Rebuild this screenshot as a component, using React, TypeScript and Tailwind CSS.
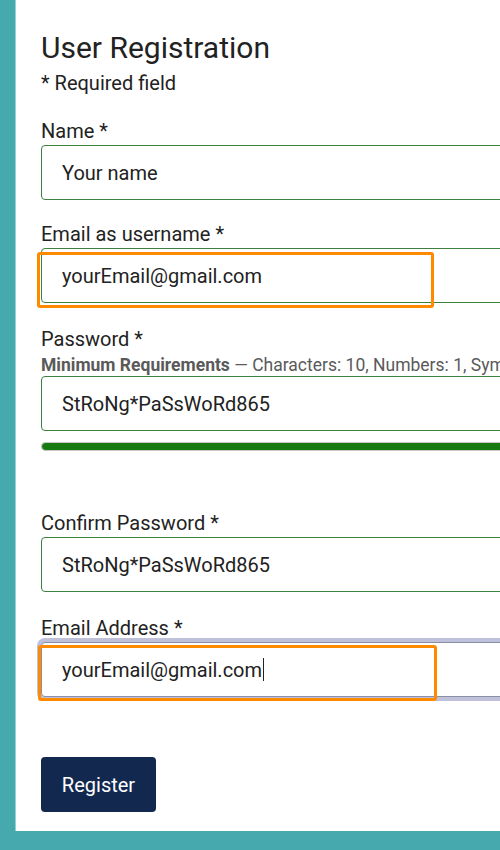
import React from "react";

function Field({
  label,
  value,
  hint,
  focused,
  highlight,
  className = "",
}: {
  label: string;
  value: string;
  hint?: boolean;
  focused?: boolean;
  highlight?: "a" | "b";
  className?: string;
}) {
  return (
    <div className={className}>
      <label className="block text-[20px] leading-[24px] text-[#222]">{label}</label>
      {hint && (
        <p className="mt-[4px] whitespace-nowrap text-[17.5px] leading-[20px] text-[#5a5a5a]">
          <span className="font-bold">Minimum Requirements</span> — Characters: 10, Numbers: 1, Symbols: 1
        </p>
      )}
      <div className={`relative ${hint ? "mt-[1px]" : "mt-[2px]"}`}>
        <div
          className={`flex h-[55px] w-[560px] items-center rounded-[4px] border bg-white pl-[20px] text-[20px] text-[#222] ${
            focused ? "border-[#8a8fa8] shadow-[0_0_0_4px_#bfc0da]" : "border-[#3d7f3d]"
          }`}
        >
          {value}
          {focused && <span className="ml-[1px] inline-block h-[23px] w-px bg-[#222]" />}
        </div>
        {highlight === "a" && (
          <div className="pointer-events-none absolute left-[-4px] top-[4px] h-[56px] w-[397px] rounded-[3px] border-[3px] border-[#ff8a00]" />
        )}
        {highlight === "b" && (
          <div className="pointer-events-none absolute left-[-3px] top-[3px] h-[56px] w-[399px] rounded-[3px] border-[3px] border-[#ff8a00]" />
        )}
      </div>
    </div>
  );
}

export default function App() {
  return (
    <div
      className="flex h-[850px] w-[500px] overflow-hidden bg-[#45a9ad] pb-[19px] pl-[15px]"
      style={{ fontFamily: "Roboto, 'Noto Sans', sans-serif" }}
    >
      <div className="flex-1 overflow-hidden border-l border-[#8fd3d6] bg-white pl-[25px] pt-[31px]">
        <h1 className="text-[30px] leading-[34px] text-[#222]">User Registration</h1>
        <p className="mt-[6px] text-[20px] leading-[24px] text-[#222]">* Required field</p>

        <Field className="mt-[24px]" label="Name *" value="Your name" />
        <Field className="mt-[22px]" label="Email as username *" value="yourEmail@gmail.com" highlight="a" />
        <Field className="mt-[24px]" label="Password *" value="StRoNg*PaSsWoRd865" hint />
        <div className="mt-[11px] h-[9px] w-[560px] rounded-full border border-[#c8c8c8] bg-[#157a12]" />

        <Field className="mt-[60px]" label="Confirm Password *" value="StRoNg*PaSsWoRd865" />
        <Field className="mt-[24px]" label="Email Address *" value="yourEmail@gmail.com" focused highlight="b" />

        <button className="mt-[60px] h-[55px] w-[115px] rounded-[4px] bg-[#13284f] text-[20px] text-white">
          Register
        </button>
      </div>
    </div>
  );
}
